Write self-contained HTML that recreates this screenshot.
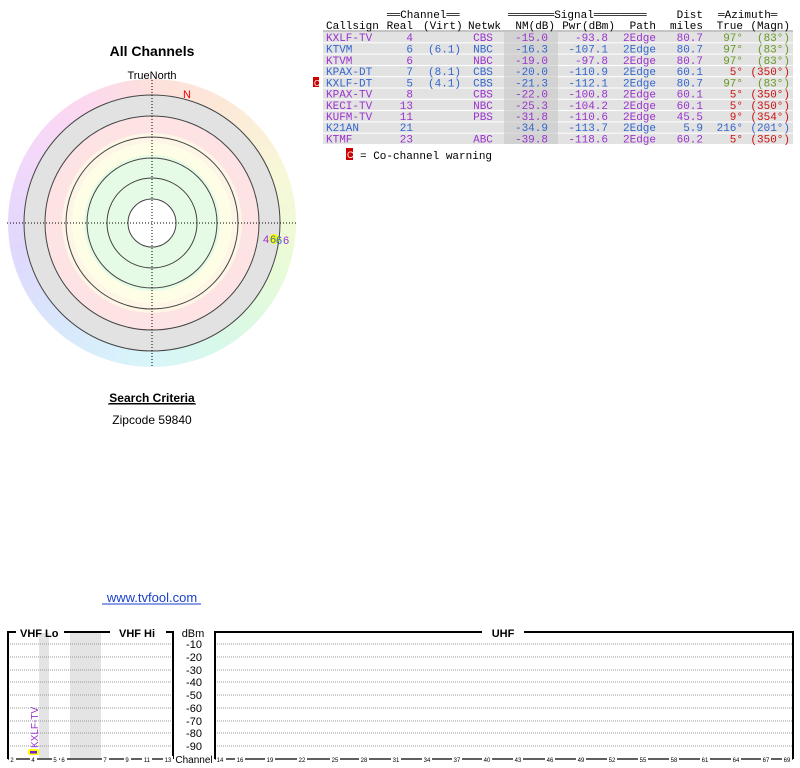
<!DOCTYPE html>
<html><head><meta charset="utf-8"><style>
html,body{margin:0;padding:0;background:#fff;width:800px;height:768px;overflow:hidden;position:relative}
#ring{position:absolute;left:8px;top:79px;width:288px;height:288px;border-radius:50%;
background:conic-gradient(from 0deg,#fde0dc,#fde8d8 30deg,#f8f8d8 70deg,#e8fbd8 110deg,#d8f8e8 150deg,#d8f6fa 180deg,#d8e8fc 220deg,#e0d8fc 260deg,#f4d8fa 300deg,#fcd8f0 330deg,#fde0dc)}
svg{position:absolute;left:0;top:0}
</style></head><body>
<div id="ring"></div>
<svg width="800" height="768" xmlns="http://www.w3.org/2000/svg" font-family="Liberation Sans, sans-serif">
<!-- polar -->
<circle cx="152" cy="223" r="128" fill="#e2e2e2"/>
<circle cx="152" cy="223" r="107" fill="#fde3e3"/>
<circle cx="152" cy="223" r="90" fill="#fdf5e6"/>
<circle cx="152" cy="223" r="80" fill="#fefee6"/>
<circle cx="152" cy="223" r="68" fill="#e6fbe6"/>
<circle cx="152" cy="223" r="24" fill="#fff"/>
<g fill="none" stroke="#444" stroke-width="1">
<circle cx="152" cy="223" r="128"/><circle cx="152" cy="223" r="107"/><circle cx="152" cy="223" r="86"/>
<circle cx="152" cy="223" r="65"/><circle cx="152" cy="223" r="45"/><circle cx="152" cy="223" r="24"/>
</g>
<g stroke="#000" stroke-dasharray="1,2"><line x1="152" y1="80" x2="152" y2="367"/><line x1="7" y1="223" x2="297" y2="223"/></g>
<text x="152" y="56" font-size="14" font-weight="bold" text-anchor="middle">All Channels</text>
<text x="152" y="79" font-size="11" text-anchor="middle">TrueNorth</text>
<text x="187" y="98" font-size="11" fill="#e00" text-anchor="middle">N</text>
<circle cx="274" cy="239" r="5" fill="#ff0"/>
<text x="263" y="243" font-size="11" fill="#9933cc">4</text>
<text x="270" y="243" font-size="11" fill="#3366cc">6</text>
<text x="276" y="244" font-size="11" fill="#3366cc">6</text>
<text x="283" y="244" font-size="11" fill="#9933cc">6</text>
<text x="152" y="402" font-size="12" font-weight="bold" text-anchor="middle" text-decoration="underline">Search Criteria</text>
<line x1="108" y1="404" x2="196" y2="404" stroke="#000"/>
<text x="152" y="424" font-size="12" text-anchor="middle">Zipcode 59840</text>
<text x="152" y="602" font-size="13" fill="#1a3fcc" text-anchor="middle">www.tvfool.com</text>
<line x1="102" y1="604" x2="201" y2="604" stroke="#1a3fcc"/>

<!-- table -->
<g fill="#e2e2e2">
<rect x="323" y="32" width="470" height="10.3"/><rect x="323" y="43.3" width="470" height="10.3"/><rect x="323" y="54.6" width="470" height="10.3"/><rect x="323" y="65.9" width="470" height="10.3"/><rect x="323" y="77.2" width="470" height="10.3"/><rect x="323" y="88.5" width="470" height="10.3"/><rect x="323" y="99.8" width="470" height="10.3"/><rect x="323" y="111.1" width="470" height="10.3"/><rect x="323" y="122.4" width="470" height="10.3"/><rect x="323" y="133.7" width="470" height="10.3"/>
</g>
<rect x="504" y="32" width="54" height="112" fill="#c8c8c8" opacity="0.6"/>
<line x1="323" y1="31" x2="793" y2="31" stroke="#888"/>
<g font-family="Liberation Mono, monospace" font-size="11" fill="#000">
<text x="387" y="18">══Channel══</text>
<text x="508" y="18">═══════Signal════════</text>
<text x="703" y="18" text-anchor="end">Dist</text>
<text x="718" y="18">═Azimuth═</text>
<text x="326" y="29">Callsign</text><text x="413" y="29" text-anchor="end">Real</text><text x="423" y="29">(Virt)</text>
<text x="468" y="29">Netwk</text><text x="555" y="29" text-anchor="end">NM(dB)</text><text x="615" y="29" text-anchor="end">Pwr(dBm)</text>
<text x="656" y="29" text-anchor="end">Path</text><text x="703" y="29" text-anchor="end">miles</text><text x="743" y="29" text-anchor="end">True</text><text x="790" y="29" text-anchor="end">(Magn)</text>
</g>
<g font-family="Liberation Mono, monospace" font-size="11">
<g fill="#9933cc"><text x="326" y="41">KXLF-TV</text><text x="413" y="41" text-anchor="end">4</text><text x="483" y="41" text-anchor="middle">CBS</text><text x="548" y="41" text-anchor="end">-15.0</text><text x="608" y="41" text-anchor="end">-93.8</text><text x="623" y="41">2Edge</text><text x="703" y="41" text-anchor="end">80.7</text></g>
<g fill="#669922"><text x="743" y="41" text-anchor="end">97°</text><text x="790" y="41" text-anchor="end">(83°)</text></g>
<g fill="#3366cc"><text x="326" y="52.5">KTVM</text><text x="413" y="52.5" text-anchor="end">6</text><text x="428" y="52.5">(6.1)</text><text x="483" y="52.5" text-anchor="middle">NBC</text><text x="548" y="52.5" text-anchor="end">-16.3</text><text x="608" y="52.5" text-anchor="end">-107.1</text><text x="623" y="52.5">2Edge</text><text x="703" y="52.5" text-anchor="end">80.7</text></g>
<g fill="#669922"><text x="743" y="52.5" text-anchor="end">97°</text><text x="790" y="52.5" text-anchor="end">(83°)</text></g>
<g fill="#9933cc"><text x="326" y="64">KTVM</text><text x="413" y="64" text-anchor="end">6</text><text x="483" y="64" text-anchor="middle">NBC</text><text x="548" y="64" text-anchor="end">-19.0</text><text x="608" y="64" text-anchor="end">-97.8</text><text x="623" y="64">2Edge</text><text x="703" y="64" text-anchor="end">80.7</text></g>
<g fill="#669922"><text x="743" y="64" text-anchor="end">97°</text><text x="790" y="64" text-anchor="end">(83°)</text></g>
<g fill="#3366cc"><text x="326" y="75">KPAX-DT</text><text x="413" y="75" text-anchor="end">7</text><text x="428" y="75">(8.1)</text><text x="483" y="75" text-anchor="middle">CBS</text><text x="548" y="75" text-anchor="end">-20.0</text><text x="608" y="75" text-anchor="end">-110.9</text><text x="623" y="75">2Edge</text><text x="703" y="75" text-anchor="end">60.1</text></g>
<g fill="#cc1111"><text x="743" y="75" text-anchor="end">5°</text><text x="790" y="75" text-anchor="end">(350°)</text></g>
<g fill="#3366cc"><text x="326" y="86.5">KXLF-DT</text><text x="413" y="86.5" text-anchor="end">5</text><text x="428" y="86.5">(4.1)</text><text x="483" y="86.5" text-anchor="middle">CBS</text><text x="548" y="86.5" text-anchor="end">-21.3</text><text x="608" y="86.5" text-anchor="end">-112.1</text><text x="623" y="86.5">2Edge</text><text x="703" y="86.5" text-anchor="end">80.7</text></g>
<g fill="#669922"><text x="743" y="86.5" text-anchor="end">97°</text><text x="790" y="86.5" text-anchor="end">(83°)</text></g>
<g fill="#9933cc"><text x="326" y="97.5">KPAX-TV</text><text x="413" y="97.5" text-anchor="end">8</text><text x="483" y="97.5" text-anchor="middle">CBS</text><text x="548" y="97.5" text-anchor="end">-22.0</text><text x="608" y="97.5" text-anchor="end">-100.8</text><text x="623" y="97.5">2Edge</text><text x="703" y="97.5" text-anchor="end">60.1</text></g>
<g fill="#cc1111"><text x="743" y="97.5" text-anchor="end">5°</text><text x="790" y="97.5" text-anchor="end">(350°)</text></g>
<g fill="#9933cc"><text x="326" y="109">KECI-TV</text><text x="413" y="109" text-anchor="end">13</text><text x="483" y="109" text-anchor="middle">NBC</text><text x="548" y="109" text-anchor="end">-25.3</text><text x="608" y="109" text-anchor="end">-104.2</text><text x="623" y="109">2Edge</text><text x="703" y="109" text-anchor="end">60.1</text></g>
<g fill="#cc1111"><text x="743" y="109" text-anchor="end">5°</text><text x="790" y="109" text-anchor="end">(350°)</text></g>
<g fill="#9933cc"><text x="326" y="120">KUFM-TV</text><text x="413" y="120" text-anchor="end">11</text><text x="483" y="120" text-anchor="middle">PBS</text><text x="548" y="120" text-anchor="end">-31.8</text><text x="608" y="120" text-anchor="end">-110.6</text><text x="623" y="120">2Edge</text><text x="703" y="120" text-anchor="end">45.5</text></g>
<g fill="#cc1111"><text x="743" y="120" text-anchor="end">9°</text><text x="790" y="120" text-anchor="end">(354°)</text></g>
<g fill="#3366cc"><text x="326" y="131">K21AN</text><text x="413" y="131" text-anchor="end">21</text><text x="548" y="131" text-anchor="end">-34.9</text><text x="608" y="131" text-anchor="end">-113.7</text><text x="623" y="131">2Edge</text><text x="703" y="131" text-anchor="end">5.9</text><text x="743" y="131" text-anchor="end">216°</text><text x="790" y="131" text-anchor="end">(201°)</text></g>
<g fill="#9933cc"><text x="326" y="142.5">KTMF</text><text x="413" y="142.5" text-anchor="end">23</text><text x="483" y="142.5" text-anchor="middle">ABC</text><text x="548" y="142.5" text-anchor="end">-39.8</text><text x="608" y="142.5" text-anchor="end">-118.6</text><text x="623" y="142.5">2Edge</text><text x="703" y="142.5" text-anchor="end">60.2</text></g>
<g fill="#cc1111"><text x="743" y="142.5" text-anchor="end">5°</text><text x="790" y="142.5" text-anchor="end">(350°)</text></g>
</g>
<rect x="313" y="77" width="6" height="10" fill="#c00"/><text x="314" y="86" font-size="8" fill="#fff">C</text>
<rect x="346" y="148" width="7" height="12" fill="#c00"/><text x="347" y="158" font-size="9" fill="#fff">C</text>
<text x="360" y="159" font-family="Liberation Mono, monospace" font-size="11">= Co-channel warning</text>

<!-- bottom chart -->
<rect x="39" y="633" width="10" height="125" fill="#e4e4e4"/>
<rect x="70" y="633" width="31" height="125" fill="#e4e4e4"/>
<g stroke="#999" stroke-dasharray="1,1">
<line x1="8" y1="644" x2="172" y2="644"/><line x1="8" y1="657" x2="172" y2="657"/><line x1="8" y1="670" x2="172" y2="670"/><line x1="8" y1="682" x2="172" y2="682"/><line x1="8" y1="695" x2="172" y2="695"/><line x1="8" y1="708" x2="172" y2="708"/><line x1="8" y1="721" x2="172" y2="721"/><line x1="8" y1="733" x2="172" y2="733"/><line x1="8" y1="746" x2="172" y2="746"/>
<line x1="215" y1="644" x2="792" y2="644"/><line x1="215" y1="657" x2="792" y2="657"/><line x1="215" y1="670" x2="792" y2="670"/><line x1="215" y1="682" x2="792" y2="682"/><line x1="215" y1="695" x2="792" y2="695"/><line x1="215" y1="708" x2="792" y2="708"/><line x1="215" y1="721" x2="792" y2="721"/><line x1="215" y1="733" x2="792" y2="733"/><line x1="215" y1="746" x2="792" y2="746"/>
</g>
<g fill="none" stroke="#000" stroke-width="2">
<polyline points="8,637 8,632 16,632"/><line x1="64" y1="632" x2="110" y2="632"/><polyline points="166,632 173,632 173,759"/>
<line x1="8" y1="632" x2="8" y2="759"/>
<polyline points="215,759 215,632 482,632"/><polyline points="524,632 793,632 793,759"/>
</g>
<g stroke="#000" stroke-width="1.2">
<line x1="8" y1="759" x2="173" y2="759"/><line x1="215" y1="759" x2="793" y2="759"/>
</g>
<text x="20" y="637" font-size="11" font-weight="bold">VHF Lo</text>
<text x="119" y="637" font-size="11" font-weight="bold">VHF Hi</text>
<text x="503" y="637" font-size="11" font-weight="bold" text-anchor="middle">UHF</text>
<g font-size="11" text-anchor="middle">
<text x="193" y="637">dBm</text><text x="194" y="648">-10</text><text x="194" y="661">-20</text><text x="194" y="674">-30</text><text x="194" y="686">-40</text><text x="194" y="699">-50</text><text x="194" y="712">-60</text><text x="194" y="725">-70</text><text x="194" y="737">-80</text><text x="194" y="750">-90</text>
<text x="194" y="763" font-size="10">Channel</text>
</g>
<rect x="28" y="749" width="11" height="6" rx="2" fill="#ff0"/><rect x="30" y="751" width="7" height="2.5" fill="#7722cc"/>
<text transform="translate(38,748) rotate(-90)" font-size="10" fill="#9933cc">KXLF-TV</text>
<g font-size="6" text-anchor="middle" fill="#000">
<rect x="9" y="756" width="7" height="6" fill="#fff"/><text x="12" y="762">2</text>
<rect x="30" y="756" width="7" height="6" fill="#fff"/><text x="33" y="762">4</text>
<rect x="52" y="756" width="7" height="6" fill="#fff"/><text x="55" y="762">5</text>
<rect x="60" y="756" width="7" height="6" fill="#fff"/><text x="63" y="762">6</text>
<rect x="102" y="756" width="7" height="6" fill="#fff"/><text x="105" y="762">7</text>
<rect x="124" y="756" width="7" height="6" fill="#fff"/><text x="127" y="762">9</text>
<rect x="142" y="756" width="10" height="6" fill="#fff"/><text x="147" y="762">11</text>
<rect x="163" y="756" width="10" height="6" fill="#fff"/><text x="168" y="762">13</text>
<g>
<rect x="216" y="756" width="10" height="6" fill="#fff"/><text x="220" y="762">14</text>
<rect x="235" y="756" width="10" height="6" fill="#fff"/><text x="240" y="762">16</text>
<rect x="265" y="756" width="10" height="6" fill="#fff"/><text x="270" y="762">19</text>
<rect x="297" y="756" width="10" height="6" fill="#fff"/><text x="302" y="762">22</text>
<rect x="330" y="756" width="10" height="6" fill="#fff"/><text x="335" y="762">25</text>
<rect x="359" y="756" width="10" height="6" fill="#fff"/><text x="364" y="762">28</text>
<rect x="391" y="756" width="10" height="6" fill="#fff"/><text x="396" y="762">31</text>
<rect x="422" y="756" width="10" height="6" fill="#fff"/><text x="427" y="762">34</text>
<rect x="452" y="756" width="10" height="6" fill="#fff"/><text x="457" y="762">37</text>
<rect x="482" y="756" width="10" height="6" fill="#fff"/><text x="487" y="762">40</text>
<rect x="513" y="756" width="10" height="6" fill="#fff"/><text x="518" y="762">43</text>
<rect x="545" y="756" width="10" height="6" fill="#fff"/><text x="550" y="762">46</text>
<rect x="576" y="756" width="10" height="6" fill="#fff"/><text x="581" y="762">49</text>
<rect x="607" y="756" width="10" height="6" fill="#fff"/><text x="612" y="762">52</text>
<rect x="638" y="756" width="10" height="6" fill="#fff"/><text x="643" y="762">55</text>
<rect x="669" y="756" width="10" height="6" fill="#fff"/><text x="674" y="762">58</text>
<rect x="700" y="756" width="10" height="6" fill="#fff"/><text x="705" y="762">61</text>
<rect x="731" y="756" width="10" height="6" fill="#fff"/><text x="736" y="762">64</text>
<rect x="761" y="756" width="10" height="6" fill="#fff"/><text x="766" y="762">67</text>
<rect x="782" y="756" width="10" height="6" fill="#fff"/><text x="787" y="762">69</text>
</g>
</g>
</svg>
</body></html>
